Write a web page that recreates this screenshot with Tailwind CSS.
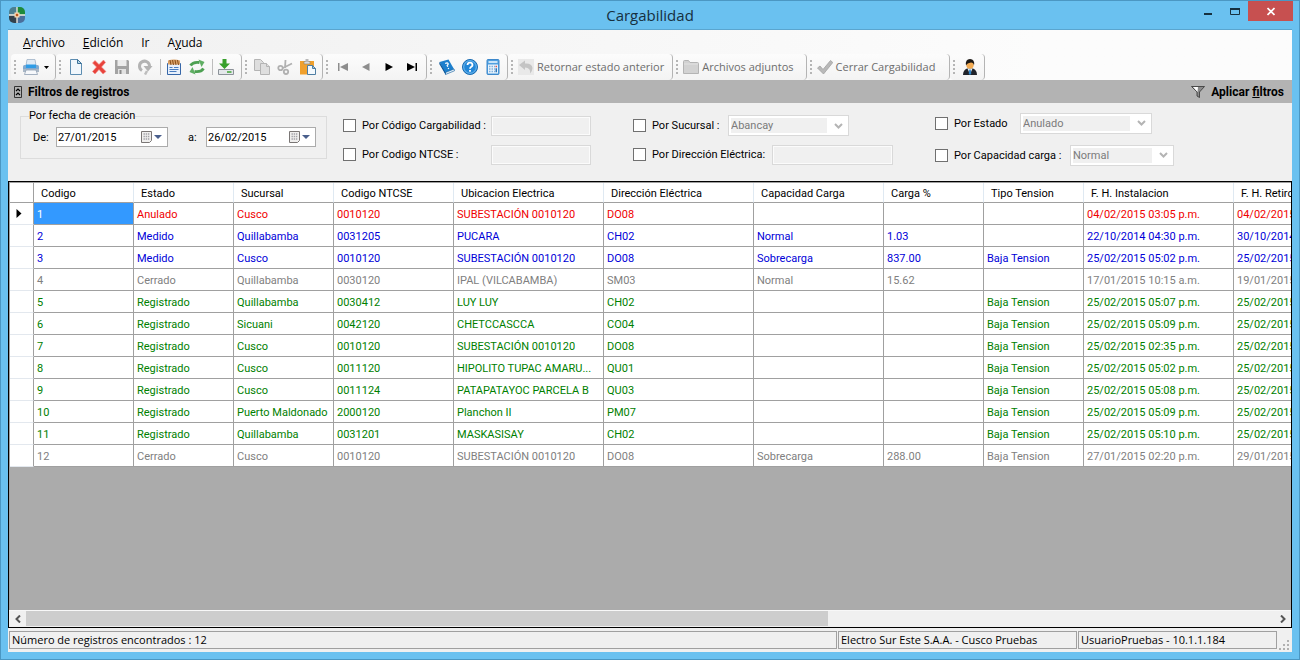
<!DOCTYPE html>
<html lang="es">
<head>
    <meta charset="UTF-8">
    <meta name="viewport" content="width=device-width, initial-scale=1.0">
    <title>Cargabilidad</title>
    <script src="https://cdn.jsdelivr.net/npm/@tailwindcss/browser@4"></script>
</head>
<body class="h-screen overflow-hidden bg-[#6ac1f0] border border-[#4b97c3] flex flex-col text-black font-[Roboto,sans-serif]">

    <!-- Title bar -->
    <header class="h-7 shrink-0 flex items-start pl-2 pr-1.5">
        <div class="w-[97px] pt-1.5">
            <svg class="size-4" viewBox="0 0 16 16">
                <defs><clipPath id="logo"><rect width="16" height="16" rx="5"/></clipPath></defs>
                <g clip-path="url(#logo)">
                    <path d="M0 0h8v8H0z" fill="#4a7f92"/>
                    <path d="M8 0h8v8H8z" fill="#1e8a3c"/>
                    <path d="M0 8h8v8H0z" fill="#33414c"/>
                    <path d="M8 8h8v8H8z" fill="#4a6f9c"/>
                </g>
                <path d="M8 0v16M0 8h16" stroke="#f4efe4" stroke-width="1.3"/>
                <rect x="5.5" y="5.5" width="5" height="5" fill="#f6d9b4"/>
                <rect x="6.8" y="6.8" width="2.4" height="2.4" fill="#c2571a"/>
            </svg>
        </div>
        <h1 class="flex-1 text-center text-[15px] leading-5 pt-1 text-[#16303f] font-['Open_Sans',sans-serif]">Cargabilidad</h1>
        <div class="flex">
            <button type="button" aria-label="Minimizar" class="w-[27px] h-5 flex justify-center">
                <svg class="w-[9px] h-5" viewBox="0 0 9 20"><path d="M1 12h8v2H1z" fill="#16303f"/></svg>
            </button>
            <button type="button" aria-label="Maximizar" class="w-[27px] h-5 flex justify-center">
                <svg class="w-[11px] h-5" viewBox="0 0 11 20"><path d="M1.500 7.500h9v6h-9z" fill="none" stroke="#16303f"/><path d="M1 7h10v2H1z" fill="#16303f"/></svg>
            </button>
            <button type="button" aria-label="Cerrar" class="w-[45px] h-5 bg-[#c75050] flex justify-center">
                <svg class="w-2 h-5" viewBox="0 0 8 20"><path d="M.5 7l7 7M7.500 7l-7 7" stroke="#fff" stroke-width="1.7"/></svg>
            </button>
        </div>
    </header>

    <main class="flex-1 min-h-0 mx-[7px] mb-[7px] flex flex-col bg-[#f0f0f0] border-t border-[#5aa5cf]">

        <!-- Menu -->
        <nav class="h-6 shrink-0 flex items-center pt-0.5 pl-[15px] gap-[18px] text-[12px] bg-linear-to-r from-[#f0f0f0] to-[#fcfcfc] to-80% font-['Open_Sans',sans-serif]">
            <a href="#"><u>A</u>rchivo</a>
            <a href="#"><u>E</u>dición</a>
            <a href="#">Ir</a>
            <a href="#">A<u>y</u>uda</a>
        </nav>

        <!-- Toolbar -->
        <div class="h-[26px] shrink-0 flex pl-[3px] text-[11px] text-[#6d6d6d] bg-linear-to-r from-[#f0f0f0] to-[#fcfcfc] to-80% font-['Open_Sans',sans-serif]">
            <div class="flex items-center pr-1 border-r border-[#b4b4b4] rounded bg-linear-to-b from-[#fcfcfc] to-[#f3f3f3]">
                <i class="mx-[3px] w-0.5 h-3.5 bg-[repeating-linear-gradient(#b5b5b5_0_2px,transparent_2px_4px)]"></i>
                <button type="button" aria-label="Imprimir" class="w-[23px] flex justify-center">
                    <svg class="size-4" viewBox="0 0 16 16">
                        <path d="M4 .5h8l1 6H3z" fill="#dfeaf5" stroke="#9fb2c6" stroke-width=".8"/>
                        <path d="M0 7.500q0-1.500 1.500-1.500h13q1.500 0 1.500 1.500V12H0z" fill="#7fa9d0"/>
                        <path d="M3 5.500h10v3.500H3z" fill="#2e9ce6"/>
                        <path d="M0 10h16v3H0z" fill="#a9b7c6"/>
                        <path d="M3 11h10l1.500 4.500h-13z" fill="#f6f8fb" stroke="#8fa0b3" stroke-width=".8"/>
                    </svg>
                </button>
                <button type="button" aria-label="Opciones de impresión" class="w-[9px] flex justify-center"><svg class="w-[5px] h-[3px]" viewBox="0 0 5 3"><path d="M0 0h5L2.500 3z" fill="#000"/></svg></button>
            </div>

            <div class="flex items-center pr-1 border-r border-[#b4b4b4] rounded bg-linear-to-b from-[#fcfcfc] to-[#f3f3f3]">
                <i class="mx-[3px] w-0.5 h-3.5 bg-[repeating-linear-gradient(#b5b5b5_0_2px,transparent_2px_4px)]"></i>
                <button type="button" aria-label="Nuevo" class="w-[23px] flex justify-center">
                    <svg class="size-4" viewBox="0 0 16 16"><path d="M2.500.5h7l4 4v11h-11z" fill="#f1f7fc" stroke="#5d8db1"/><path d="M9.500.5v4h4z" fill="#b9d8ec" stroke="#3c7299"/></svg>
                </button>
                <button type="button" aria-label="Eliminar" class="w-[23px] flex justify-center">
                    <svg class="size-4" viewBox="0 0 16 16"><path d="M1.500 4L4 1.500 8 5.500 12.500 1 14.500 3.500 10.500 8 15 12.500 12 15 8 10.500 4 15 1.500 12.500 5.500 8z" fill="#e8433c" stroke="#f08c86" stroke-width=".6"/></svg>
                </button>
                <button type="button" aria-label="Guardar" class="w-[23px] flex justify-center">
                    <svg class="size-4" viewBox="0 0 16 16"><path d="M1 1h13l1 1v13H1z" fill="#a3a3a3"/><path d="M3.500 1h9v6h-9z" fill="#ececec"/><path d="M4 10h8v5H4z" fill="#e2e2e2"/><path d="M5.500 11h2v4h-2z" fill="#8a8a8a"/></svg>
                </button>
                <button type="button" aria-label="Deshacer" class="w-[23px] flex justify-center">
                    <svg class="size-4" viewBox="0 0 16 16"><path d="M5 11.500A5 5 0 1 1 12.500 7" fill="none" stroke="#b3b3b3" stroke-width="3"/><path d="M6.500 7H15.500L11 12.500z" fill="#b3b3b3"/><path d="M10 12l-2 3.500" stroke="#bdbdbd" stroke-width="2.500"/></svg>
                </button>
                <i class="w-1.5 h-4 flex justify-end"><b class="w-px mr-px bg-[#bdbdbd]"></b></i>
                <button type="button" aria-label="Registro" class="w-[23px] flex justify-center">
                    <svg class="size-4" viewBox="0 0 16 16"><path d="M1.500 4.500h13v11h-13z" fill="#e8f0fb" stroke="#3767a8"/><path d="M2 1.500q6-2 12 0v4H2z" fill="#d9a066"/><path d="M4 1l1 5M6.500 1l1 5M9 1l1 5M11.500 1l1 5" stroke="#8a4f1b"/><path d="M3.500 8.500h3M8 8.500h4.500M3.500 10.500h9M3.500 12.500h7" stroke="#4a7dbf"/></svg>
                </button>
                <button type="button" aria-label="Actualizar" class="w-[23px] flex justify-center">
                    <svg class="size-4" viewBox="0 0 16 16"><path d="M1.500 6.500Q4 2.500 10.500 3.500" fill="none" stroke="#4da052" stroke-width="2.800"/><path d="M9.500.5l6 2.500-3 5z" fill="#5fae63"/><path d="M14.500 9.500Q12 13.500 5.500 12.500" fill="none" stroke="#4da052" stroke-width="2.800"/><path d="M6.500 15.500l-6-2.500 3-5z" fill="#5fae63"/></svg>
                </button>
                <i class="w-1.5 h-4 flex justify-end"><b class="w-px mr-px bg-[#bdbdbd]"></b></i>
                <button type="button" aria-label="Descargar" class="w-[23px] flex justify-center">
                    <svg class="size-4" viewBox="0 0 16 16"><path d="M.5 10.500h15v5H.5z" fill="#e4e7ea" stroke="#8c9299"/><path d="M9 13h4.500" stroke="#3fa535" stroke-width="1.500"/><path d="M4.500 0h4v4.500H12L6.500 10 1 4.500h3.500z" fill="#38a02c"/></svg>
                </button>
            </div>

            <div class="flex items-center pr-[3px] border-r border-[#b4b4b4] rounded bg-linear-to-b from-[#fcfcfc] to-[#f3f3f3]">
                <i class="mx-[3px] w-0.5 h-3.5 bg-[repeating-linear-gradient(#b5b5b5_0_2px,transparent_2px_4px)]"></i>
                <button type="button" aria-label="Copiar" class="w-[23px] flex justify-center">
                    <svg class="size-4" viewBox="0 0 16 16"><g fill="#dedede" stroke="#b4b4b4"><path d="M.5.5h6l3 3v8h-9z"/><path d="M6.500 4.500h6l3 3v8h-9z"/><path d="M12.500 4.500v3h3"/></g></svg>
                </button>
                <button type="button" aria-label="Cortar" class="w-[23px] flex justify-center">
                    <svg class="size-4" viewBox="0 0 16 16"><g fill="none" stroke="#b0b0b0" stroke-width="1.800"><path d="M8.500 1l-.5 8M15 4.500L6 9"/><circle cx="3.500" cy="9" r="2.200"/><circle cx="9" cy="12.800" r="2.200"/></g></svg>
                </button>
                <button type="button" aria-label="Pegar" class="w-[23px] flex justify-center">
                    <svg class="size-4" viewBox="0 0 16 16"><path d="M0 2h14v13.500H0z" fill="#f0a02c"/><path d="M4 2.500h6V5H4z" fill="#dcdcdc" stroke="#9a8a6a" stroke-width=".7"/><path d="M5.500 0h3v3h-3z" fill="#b8b8b8"/><path d="M7.500 6.500h5l3 3v6h-8z" fill="#f4f9fd" stroke="#4e7ea3"/><path d="M12.500 6.500v3h3z" fill="#a9cbe2" stroke="#4e7ea3"/></svg>
                </button>
            </div>

            <div class="flex items-center pr-[3px] border-r border-[#b4b4b4] rounded bg-linear-to-b from-[#fcfcfc] to-[#f3f3f3]">
                <i class="mx-[3px] w-0.5 h-3.5 bg-[repeating-linear-gradient(#b5b5b5_0_2px,transparent_2px_4px)]"></i>
                <button type="button" aria-label="Primero" class="w-[23px] flex justify-center"><svg class="size-4" viewBox="0 0 16 16" fill="#8d8d8d"><path d="M3 4h1.500v8H3zM13 4v8L5 8z"/></svg></button>
                <button type="button" aria-label="Anterior" class="w-[23px] flex justify-center"><svg class="size-4" viewBox="0 0 16 16" fill="#8d8d8d"><path d="M11.500 4v8L4 8z"/></svg></button>
                <button type="button" aria-label="Siguiente" class="w-[23px] flex justify-center"><svg class="size-4" viewBox="0 0 16 16" fill="#000"><path d="M4.500 4v8L12 8z"/></svg></button>
                <button type="button" aria-label="Último" class="w-[23px] flex justify-center"><svg class="size-4" viewBox="0 0 16 16" fill="#000"><path d="M3 4v8l8-4zM11.500 4H13v8h-1.500z"/></svg></button>
            </div>

            <div class="flex items-center pr-[3px] border-r border-[#b4b4b4] rounded bg-linear-to-b from-[#fcfcfc] to-[#f3f3f3]">
                <i class="mx-[3px] w-0.5 h-3.5 bg-[repeating-linear-gradient(#b5b5b5_0_2px,transparent_2px_4px)]"></i>
                <button type="button" aria-label="Manual" class="w-[23px] flex justify-center">
                    <svg class="size-4" viewBox="0 0 16 16"><path d="M.5 3L9.500.5l6 10.500-9 4.500z" fill="#1c7fcd"/><path d="M6.500 13.500L15 10l.5 1.800-9 3.700z" fill="#e8f2fa" stroke="#14609e" stroke-width=".6"/><path d="M.5 3l6 10.500v2L.3 5z" fill="#0d5596"/><path d="M6.200 4.500q2.500-1.500 3 .3 0 1-1 1.700l.6 1.300M9.200 9l.5 1" fill="none" stroke="#fff" stroke-width="1.300"/></svg>
                </button>
                <button type="button" aria-label="Ayuda" class="w-[23px] flex justify-center">
                    <svg class="size-4" viewBox="0 0 16 16"><circle cx="8" cy="8" r="7.500" fill="#2287d8" stroke="#1a6bb0"/><circle cx="8" cy="8" r="6.300" fill="none" stroke="#8cc8f2" stroke-width=".8"/><path d="M5.500 6q.2-2.300 2.500-2.300T10.500 6q0 1-1.200 1.800T8 9.800M8 11v1.800" fill="none" stroke="#fff" stroke-width="1.800"/></svg>
                </button>
                <button type="button" aria-label="Calculadora" class="w-[23px] flex justify-center">
                    <svg class="size-4" viewBox="0 0 16 16"><rect x="2" y=".5" width="12" height="15" rx="1" fill="#4f9fe0" stroke="#3d88cb"/><path d="M3.500 2h9v2h-9z" fill="#c9e4f8"/><path d="M3 5.500h10v9H3z" fill="#eaf3fb"/><path d="M4 7.500h6M4 10h6M4 12.500h6" stroke="#7fb2e0" stroke-width="1.500" stroke-dasharray="1.500 1"/><path d="M10.500 6.800H12v1.500h-1.500z" fill="#d9534f"/><path d="M10.500 9.200H12v4h-1.500z" fill="#2a75b8"/></svg>
                </button>
            </div>

            <div class="flex items-center pr-1 border-r border-[#b4b4b4] rounded bg-linear-to-b from-[#fcfcfc] to-[#f3f3f3]">
                <i class="mx-[3px] w-0.5 h-3.5 bg-[repeating-linear-gradient(#b5b5b5_0_2px,transparent_2px_4px)]"></i>
                <button type="button" class="flex items-center gap-[3px] pl-0.5 pr-1 whitespace-nowrap">
                    <svg class="size-4" viewBox="0 0 16 16"><path d="M0 0h16v16H0z" fill="#e9e9e9"/><path d="M1 6l6-4.500v3q7-.5 7.500 4.500 0 3-2.500 5.500Q13 9 7 8.500v2.500z" fill="#c4c4c4"/></svg>
                    Retornar estado anterior
                </button>
            </div>

            <div class="flex items-center pr-1 border-r border-[#b4b4b4] rounded bg-linear-to-b from-[#fcfcfc] to-[#f3f3f3]">
                <i class="mx-[3px] w-0.5 h-3.5 bg-[repeating-linear-gradient(#b5b5b5_0_2px,transparent_2px_4px)]"></i>
                <button type="button" class="flex items-center gap-[3px] pl-0.5 pr-2 whitespace-nowrap">
                    <svg class="size-4" viewBox="0 0 16 16"><path d="M.5 2.500q0-1 1-1h4l1.500 2h7.500q1 0 1 1v10H.5z" fill="#d2d2d2" stroke="#b4b4b4"/><path d="M1 5h14" stroke="#e2e2e2"/></svg>
                    Archivos adjuntos
                </button>
            </div>

            <div class="flex items-center pr-1 border-r border-[#b4b4b4] rounded bg-linear-to-b from-[#fcfcfc] to-[#f3f3f3]">
                <i class="mx-[3px] w-0.5 h-3.5 bg-[repeating-linear-gradient(#b5b5b5_0_2px,transparent_2px_4px)]"></i>
                <button type="button" class="flex items-center gap-[3px] pl-0.5 pr-2.5 whitespace-nowrap">
                    <svg class="size-4" viewBox="0 0 16 16"><path d="M.5 9L3 7l3 3.500L13.500 1.500 15.800 3.500 6.500 15z" fill="#b9b9b9" stroke="#a2a2a2" stroke-width=".8"/></svg>
                    Cerrar Cargabilidad
                </button>
            </div>

            <div class="flex items-center pr-[3px] border-r border-[#b4b4b4] rounded bg-linear-to-b from-[#fcfcfc] to-[#f3f3f3]">
                <i class="mx-[3px] w-0.5 h-3.5 bg-[repeating-linear-gradient(#b5b5b5_0_2px,transparent_2px_4px)]"></i>
                <button type="button" aria-label="Usuario" class="w-[23px] flex justify-center">
                    <svg class="size-4" viewBox="0 0 16 16"><path d="M1 16q0-5 4-6.500h6q4 1.500 4 6.500z" fill="#1f2228"/><path d="M5.500 9.500h5L8 15.500z" fill="#e6f1fa"/><path d="M7.300 10.500h1.400l.6 4L8 16l-1.300-1.500z" fill="#2d83c6"/><circle cx="8" cy="6" r="3.700" fill="#f3ab52"/><path d="M4 6.500Q3 0 8 0t4 6.500Q11.500 3.500 9 3.500 5 4 4 6.500z" fill="#1b1714"/></svg>
                </button>
            </div>
        </div>

        <!-- Filter header -->
        <div class="h-[23px] shrink-0 flex items-center justify-between pl-1.5 pr-2 bg-[#b3b3b3] font-bold text-[12px]">
            <h2 class="flex items-center gap-1.5">
                <svg class="w-2 h-3" viewBox="0 0 8 12"><path d="M.5.5h7v11h-7z" fill="none" stroke="#333"/><path d="M2 5l2-2 2 2M2 9l2-2 2 2" fill="none" stroke="#000" stroke-width="1.200"/></svg>
                Filtros de registros
            </h2>
            <button type="button" class="flex items-center gap-1.5">
                <svg class="w-[14px] h-3" viewBox="0 0 14 12"><path d="M.5.5h13L8.500 6v5.500L6 10V6z" fill="#8b8b8b" stroke="#333" stroke-width=".8"/><path d="M2 1h5L6.500 6z" fill="#fff"/></svg>
                <span>Aplicar <u>f</u>iltros</span>
            </button>
        </div>

        <!-- Filters -->
        <form class="h-[78px] shrink-0 flex items-start pl-3 text-[11px]">
            <fieldset class="w-[307px] h-[51px] mt-[5px] mr-4 pl-2 pr-1 border border-[#dcdcdc]">
                <legend class="leading-4">Por fecha de creación</legend>
                <div class="flex items-center pl-1 pt-[3px]">
                    <label for="de" class="w-[23px] pt-0.5">De:</label>
                    <div class="w-[112px] h-5 flex items-center pr-1 bg-white border border-[#ababab]">
                        <input id="de" type="text" value="27/01/2015" class="w-[84px] pl-px pt-0.5 outline-none">
                        <svg class="w-[22px] h-3" viewBox="0 0 22 12"><path d="M.5.5h10v9l-2 2h-8z" fill="#f0efee" stroke="#7a7675"/><path d="M2.500 3h6M2.500 5.500h6M2.500 8h6" stroke="#a3a3a8" stroke-width="1.400" stroke-dasharray="1.400 .8"/><path d="M13 4h8l-4 4z" fill="#4a5f8c"/></svg>
                    </div>
                    <label for="a" class="w-[38px] pl-5 pt-0.5">a:</label>
                    <div class="w-[110px] h-5 flex items-center pr-1 bg-white border border-[#ababab]">
                        <input id="a" type="text" value="26/02/2015" class="w-[82px] pl-px pt-0.5 outline-none">
                        <svg class="w-[22px] h-3" viewBox="0 0 22 12"><path d="M.5.5h10v9l-2 2h-8z" fill="#f0efee" stroke="#7a7675"/><path d="M2.500 3h6M2.500 5.500h6M2.500 8h6" stroke="#a3a3a8" stroke-width="1.400" stroke-dasharray="1.400 .8"/><path d="M13 4h8l-4 4z" fill="#4a5f8c"/></svg>
                    </div>
                </div>
            </fieldset>

            <div class="w-[290px] pt-2">
                <div class="h-[29px] flex items-center">
                    <label class="w-[148px] flex items-center gap-1.5 whitespace-nowrap"><input type="checkbox" class="appearance-none size-[13px] bg-white border border-[#707070]"><span class="pt-0.5">Por Código Cargabilidad :</span></label>
                    <input type="text" disabled aria-label="Código Cargabilidad" class="w-[100px] h-5 bg-[#f0f0f0] border border-[#d9d9d9] shadow-[inset_0_0_0_1px_#fbfbfb]">
                </div>
                <div class="h-[29px] flex items-center">
                    <label class="w-[148px] flex items-center gap-1.5 whitespace-nowrap"><input type="checkbox" class="appearance-none size-[13px] bg-white border border-[#707070]"><span class="pt-0.5">Por Codigo NTCSE :</span></label>
                    <input type="text" disabled aria-label="Codigo NTCSE" class="w-[100px] h-5 bg-[#f0f0f0] border border-[#d9d9d9] shadow-[inset_0_0_0_1px_#fbfbfb]">
                </div>
            </div>

            <div class="w-[302px] pt-2">
                <div class="h-[29px] flex items-center">
                    <label class="w-[95px] flex items-center gap-1.5 whitespace-nowrap"><input type="checkbox" class="appearance-none size-[13px] bg-white border border-[#707070]"><span class="pt-0.5">Por Sucursal :</span></label>
                    <div class="w-[121px] h-[21px] flex items-center p-0.5 bg-white border border-[#d9d9d9]">
                        <select disabled aria-label="Sucursal" class="appearance-none flex-1 h-full bg-[#f0f0f0] text-[#7b7b7b]"><option>Abancay</option></select>
                        <svg class="w-[19px] h-1.5 pl-1" viewBox="0 0 9 6"><path d="M1 1l3.500 3.500L8 1" fill="none" stroke="#b4b4b4" stroke-width="2"/></svg>
                    </div>
                </div>
                <div class="h-[29px] flex items-center">
                    <label class="w-[139px] flex items-center gap-1.5 whitespace-nowrap"><input type="checkbox" class="appearance-none size-[13px] bg-white border border-[#707070]"><span class="pt-0.5">Por Dirección Eléctrica:</span></label>
                    <input type="text" disabled aria-label="Dirección Eléctrica" class="w-[121px] h-5 bg-[#f0f0f0] border border-[#d9d9d9] shadow-[inset_0_0_0_1px_#fbfbfb]">
                </div>
            </div>

            <div class="pt-1">
                <div class="h-8 flex items-center">
                    <label class="w-[85px] flex items-center gap-1.5 whitespace-nowrap"><input type="checkbox" class="appearance-none size-[13px] bg-white border border-[#707070]"><span class="pt-0.5">Por Estado</span></label>
                    <div class="w-[132px] h-[21px] flex items-center p-0.5 bg-white border border-[#d9d9d9]">
                        <select disabled aria-label="Estado" class="appearance-none flex-1 h-full bg-[#f0f0f0] text-[#7b7b7b]"><option>Anulado</option></select>
                        <svg class="w-[19px] h-1.5 pl-1" viewBox="0 0 9 6"><path d="M1 1l3.500 3.500L8 1" fill="none" stroke="#b4b4b4" stroke-width="2"/></svg>
                    </div>
                </div>
                <div class="h-8 flex items-center">
                    <label class="w-[135px] flex items-center gap-1.5 whitespace-nowrap"><input type="checkbox" class="appearance-none size-[13px] bg-white border border-[#707070]"><span class="pt-0.5">Por Capacidad carga :</span></label>
                    <div class="w-[104px] h-[21px] flex items-center p-0.5 bg-white border border-[#d9d9d9]">
                        <select disabled aria-label="Capacidad carga" class="appearance-none flex-1 h-full bg-[#f0f0f0] text-[#7b7b7b]"><option>Normal</option></select>
                        <svg class="w-[19px] h-1.5 pl-1" viewBox="0 0 9 6"><path d="M1 1l3.500 3.500L8 1" fill="none" stroke="#b4b4b4" stroke-width="2"/></svg>
                    </div>
                </div>
            </div>
        </form>

        <!-- Records grid -->
        <div class="flex-1 min-h-0 flex flex-col border border-black bg-[#ababab]">
            <div class="flex-1 min-h-0 overflow-hidden border-t border-l border-[#a0a0a0]">
                <table class="table-fixed w-[1374px] border-separate border-spacing-0 bg-white text-[11px] text-left leading-4">
                    <colgroup>
                        <col class="w-[24px]"><col class="w-[100px]"><col class="w-[100px]"><col class="w-[100px]"><col class="w-[120px]"><col class="w-[150px]"><col class="w-[150px]"><col class="w-[130px]"><col class="w-[100px]"><col class="w-[100px]"><col class="w-[150px]"><col class="w-[150px]">
                    </colgroup>
                    <thead><tr id="columnas" class="h-5"></tr></thead>
                    <tbody id="registros"></tbody>
                </table>
            </div>
            <div class="h-[17px] shrink-0 flex items-center bg-[#f0f0f0] border-t border-[#f8f8f8]">
                <button type="button" aria-label="Desplazar a la izquierda" class="w-[17px] flex justify-center"><svg class="w-1.5 h-2" viewBox="0 0 6 8"><path d="M5 .5L1.500 4 5 7.500" fill="none" stroke="#555" stroke-width="2"/></svg></button>
                <div class="flex-1 h-full"><div class="w-9/14 h-[15px] bg-[#cdcdcd]"></div></div>
                <button type="button" aria-label="Desplazar a la derecha" class="w-[17px] flex justify-center"><svg class="w-1.5 h-2" viewBox="0 0 6 8"><path d="M1 .5L4.500 4 1 7.500" fill="none" stroke="#555" stroke-width="2"/></svg></button>
            </div>
        </div>

        <!-- Status bar -->
        <footer class="h-6 shrink-0 flex items-center gap-px pl-px text-[11px] leading-4 font-['Open_Sans',sans-serif]">
            <div class="flex-1 h-[18px] pl-0.5 border border-[#a0a0a0]">Número de registros encontrados : 12</div>
            <div class="w-[239px] h-[18px] pl-0.5 border border-[#a0a0a0]">Electro Sur Este S.A.A. - Cusco Pruebas</div>
            <div class="w-[199px] h-[18px] pl-0.5 border border-[#a0a0a0]">UsuarioPruebas - 10.1.1.184</div>
            <svg class="w-[14px] h-6" viewBox="0 0 14 24" fill="#b0b0b0"><path d="M9 12h2v2H9zM5 16h2v2H5zM9 16h2v2H9zM1 20h2v2H1zM5 20h2v2H5zM9 20h2v2H9z"/></svg>
        </footer>
    </main>

    <script>
        const columnas = ['Codigo', 'Estado', 'Sucursal', 'Codigo NTCSE', 'Ubicacion Electrica', 'Dirección Eléctrica',
            'Capacidad Carga', 'Carga %', 'Tipo Tension', 'F. H. Instalacion', 'F. H. Retiro'];

        const registros = [
            ['1', 'Anulado', 'Cusco', '0010120', 'SUBESTACIÓN 0010120', 'DO08', '', '', '', '04/02/2015 03:05 p.m.', '04/02/2015'],
            ['2', 'Medido', 'Quillabamba', '0031205', 'PUCARA', 'CH02', 'Normal', '1.03', '', '22/10/2014 04:30 p.m.', '30/10/2014'],
            ['3', 'Medido', 'Cusco', '0010120', 'SUBESTACIÓN 0010120', 'DO08', 'Sobrecarga', '837.00', 'Baja Tension', '25/02/2015 05:02 p.m.', '25/02/2015'],
            ['4', 'Cerrado', 'Quillabamba', '0030120', 'IPAL (VILCABAMBA)', 'SM03', 'Normal', '15.62', '', '17/01/2015 10:15 a.m.', '19/01/2015'],
            ['5', 'Registrado', 'Quillabamba', '0030412', 'LUY LUY', 'CH02', '', '', 'Baja Tension', '25/02/2015 05:07 p.m.', '25/02/2015'],
            ['6', 'Registrado', 'Sicuani', '0042120', 'CHETCCASCCA', 'CO04', '', '', 'Baja Tension', '25/02/2015 05:09 p.m.', '25/02/2015'],
            ['7', 'Registrado', 'Cusco', '0010120', 'SUBESTACIÓN 0010120', 'DO08', '', '', 'Baja Tension', '25/02/2015 02:35 p.m.', '25/02/2015'],
            ['8', 'Registrado', 'Cusco', '0011120', 'HIPOLITO TUPAC AMARU...', 'QU01', '', '', 'Baja Tension', '25/02/2015 05:02 p.m.', '25/02/2015'],
            ['9', 'Registrado', 'Cusco', '0011124', 'PATAPATAYOC PARCELA B', 'QU03', '', '', 'Baja Tension', '25/02/2015 05:08 p.m.', '25/02/2015'],
            ['10', 'Registrado', 'Puerto Maldonado', '2000120', 'Planchon II', 'PM07', '', '', 'Baja Tension', '25/02/2015 05:09 p.m.', '25/02/2015'],
            ['11', 'Registrado', 'Quillabamba', '0031201', 'MASKASISAY', 'CH02', '', '', 'Baja Tension', '25/02/2015 05:10 p.m.', '25/02/2015'],
            ['12', 'Cerrado', 'Cusco', '0010120', 'SUBESTACIÓN 0010120', 'DO08', 'Sobrecarga', '288.00', 'Baja Tension', '27/01/2015 02:20 p.m.', '29/01/2015']
        ];

        // Text colour of a row depends on its state
        const colores = {
            Anulado: 'text-[#f00000]',
            Medido: 'text-[#0000d8]',
            Cerrado: 'text-[#808080]',
            Registrado: 'text-[#008000]'
        };

        document.getElementById('columnas').innerHTML =
            '<th class="border-r border-b border-[#a0a0a0]"></th>' +
            columnas.map(c => `<th class="pl-[7px] pt-0.5 font-normal whitespace-nowrap border-r border-r-[#dfe9f2] border-b border-b-[#a0a0a0]">${c}</th>`).join('');

        document.getElementById('registros').innerHTML = registros.map((fila, i) => {
            const flecha = i === 0 ? '<svg class="w-1.5 h-[9px] ml-1.5" viewBox="0 0 5 9"><path d="M0 0v9l5-4.500z"/></svg>' : '';
            const celdas = fila.map((valor, j) => {
                const fondo = i === 0 && j === 0 ? 'bg-[#3399ff] text-white' : '';
                return `<td class="pl-[3px] pt-0.5 whitespace-nowrap overflow-hidden border-r border-b border-[#a0a0a0] ${fondo}">${valor}</td>`;
            }).join('');
            return `<tr class="h-[22px] ${colores[fila[1]]}"><th class="text-black border-r border-r-[#a0a0a0] border-b border-b-[#e3e8ee]">${flecha}</th>${celdas}</tr>`;
        }).join('');
    </script>
</body>
</html>
